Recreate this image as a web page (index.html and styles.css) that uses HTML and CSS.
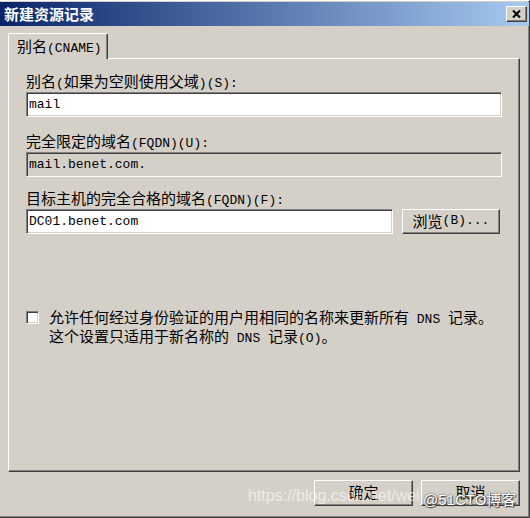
FILE: index.html
```html
<!DOCTYPE html>
<html lang="zh-CN">
<head>
    <meta charset="UTF-8">
    <title>新建资源记录</title>
    <link rel="stylesheet" href="styles.css">
</head>
<body>
    <div class="window">
        <!-- Title bar -->
        <div class="titlebar">
            <span class="title">新建资源记录</span>
            <button class="close-btn">
                <svg width="9" height="8" viewBox="0 0 9 8"><path d="M1 0.5 L8 7.5 M8 0.5 L1 7.5" stroke="#000" stroke-width="2"/></svg>
            </button>
        </div>

        <!-- Tab -->
        <div class="tabs">
            <div class="tab">别名<span class="en">(CNAME)</span></div>
        </div>

        <div class="panel">
            <div class="label">别名<span class="en">(</span>如果为空则使用父域<span class="en">)(S):</span></div>
            <div class="field">mail</div>

            <div class="label label-gap">完全限定的域名<span class="en">(FQDN)(U):</span></div>
            <div class="field field-disabled">mail.benet.com.</div>

            <div class="label label-gap-small">目标主机的完全合格的域名<span class="en">(FQDN)(F):</span></div>
            <div class="field-row">
                <div class="field field-short">DC01.benet.com</div>
                <button class="btn btn-browse">浏览<span class="en">(B)...</span></button>
            </div>

            <div class="check-row">
                <span class="checkbox"></span>
                <div class="check-text">
                    允许任何经过身份验证的用户用相同的名称来更新所有<span class="en"> DNS </span>记录。<br>
                    这个设置只适用于新名称的<span class="en"> DNS </span>记录<span class="en">(O)</span>。
                </div>
            </div>
        </div>

        <!-- Dialog buttons -->
        <div class="actions">
            <button class="btn btn-action">确定</button>
            <button class="btn btn-action">取消</button>
        </div>

        <div class="watermark">https://blog.csdn.net/wei</div>
        <div class="watermark-logo">@51CTO博客</div>
    </div>
</body>
</html>
```

FILE: styles.css
```css
body {
    margin: 0;
    background-color: #d4d0c8;
    font-family: "Noto Sans CJK SC", sans-serif;
    font-size: 15px;
    color: #000;
}
.en {
    font-family: "Liberation Mono", monospace;
    font-size: 13px;
}
.window {
    position: relative;
    width: 530px;
    height: 518px;
    box-sizing: border-box;
    padding-top: 1px;
    border-top: 1px solid #fff;
    border-right: 1px solid #404040;
    border-bottom: 1px solid #404040;
    box-shadow: inset -1px -1px #808080;
}
.titlebar {
    height: 24px;
    display: flex;
    align-items: center;
    justify-content: space-between;
    padding: 0 2px 0 4px;
    background: linear-gradient(to right, #0a246a, #a6caf0);
}
.title {
    color: #fff;
    font-weight: bold;
    font-size: 15px;
    line-height: 24px;
}
.close-btn {
    width: 21px;
    height: 16px;
    padding: 0;
    display: flex;
    align-items: center;
    justify-content: center;
    background-color: #d4d0c8;
    border: 1px solid;
    border-color: #fff #404040 #404040 #fff;
    box-shadow: inset -1px -1px #808080;
}
.tabs {
    display: flex;
    margin-top: 7px;
    padding-left: 8px;
}
.tab {
    position: relative;
    z-index: 1;
    width: 100px;
    height: 26px;
    box-sizing: border-box;
    margin-bottom: -1px;
    padding-left: 8px;
    line-height: 24px;
    background-color: #d4d0c8;
    border: 1px solid;
    border-color: #fff #404040 transparent #fff;
    border-bottom: none;
    border-radius: 2px 2px 0 0;
    box-shadow: inset -1px 0 #808080;
}
.panel {
    width: 512px;
    height: 414px;
    box-sizing: border-box;
    margin-left: 8px;
    padding: 13px 0 0 17px;
    border: 1px solid;
    border-color: #fff #404040 #404040 #fff;
    box-shadow: inset -1px -1px #808080;
}
.label {
    height: 17px;
    line-height: 17px;
    white-space: nowrap;
}
.label-gap {
    margin-top: 15px;
}
.label-gap-small {
    margin-top: 12px;
}
.field {
    width: 476px;
    height: 25px;
    box-sizing: border-box;
    margin-top: 3px;
    padding: 1px 0 0 2px;
    font-family: "Liberation Mono", monospace;
    font-size: 13px;
    line-height: 21px;
    background-color: #fff;
    border: 1px solid;
    border-color: #808080 #fff #fff #808080;
    box-shadow: inset 1px 1px #404040, inset -1px -1px #d4d0c8;
}
.field-disabled {
    background-color: #d4d0c8;
}
.field-row {
    display: flex;
    gap: 9px;
    margin-top: 3px;
}
.field-row .field {
    margin-top: 0;
}
.field-short {
    width: 367px;
}
.btn {
    height: 25px;
    padding: 0 0 2px 0;
    font-family: "Noto Sans CJK SC", sans-serif;
    font-size: 15px;
    color: #000;
    background-color: #d4d0c8;
    border: 1px solid;
    border-color: #fff #404040 #404040 #fff;
    box-shadow: inset -1px -1px #808080;
    display: flex;
    align-items: center;
    justify-content: center;
}
.btn-browse {
    width: 98px;
}
.check-row {
    display: flex;
    margin-top: 75px;
}
.checkbox {
    width: 13px;
    height: 13px;
    box-sizing: border-box;
    margin: 2px 10px 0 0;
    background-color: #fff;
    border: 1px solid;
    border-color: #808080 #fff #fff #808080;
    box-shadow: inset 1px 1px #404040, inset -1px -1px #d4d0c8;
}
.check-text {
    line-height: 16px;
}
.actions {
    display: flex;
    justify-content: flex-end;
    gap: 8px;
    margin-top: 8px;
    padding-right: 9px;
}
.btn-action {
    width: 99px;
    height: 26px;
    padding-bottom: 4px;
}
.watermark {
    position: absolute;
    left: 248px;
    top: 486px;
    font-family: "Liberation Sans", sans-serif;
    font-size: 16px;
    line-height: 18px;
    color: rgba(255, 255, 255, 0.6);
}
.watermark-logo {
    position: absolute;
    left: 423px;
    top: 490px;
    font-family: "Liberation Sans", "Noto Sans CJK SC", sans-serif;
    font-size: 15px;
    line-height: 18px;
    color: #fff;
    text-shadow: 0 0 2px #333, 1px 1px 1px #444;
}
```
